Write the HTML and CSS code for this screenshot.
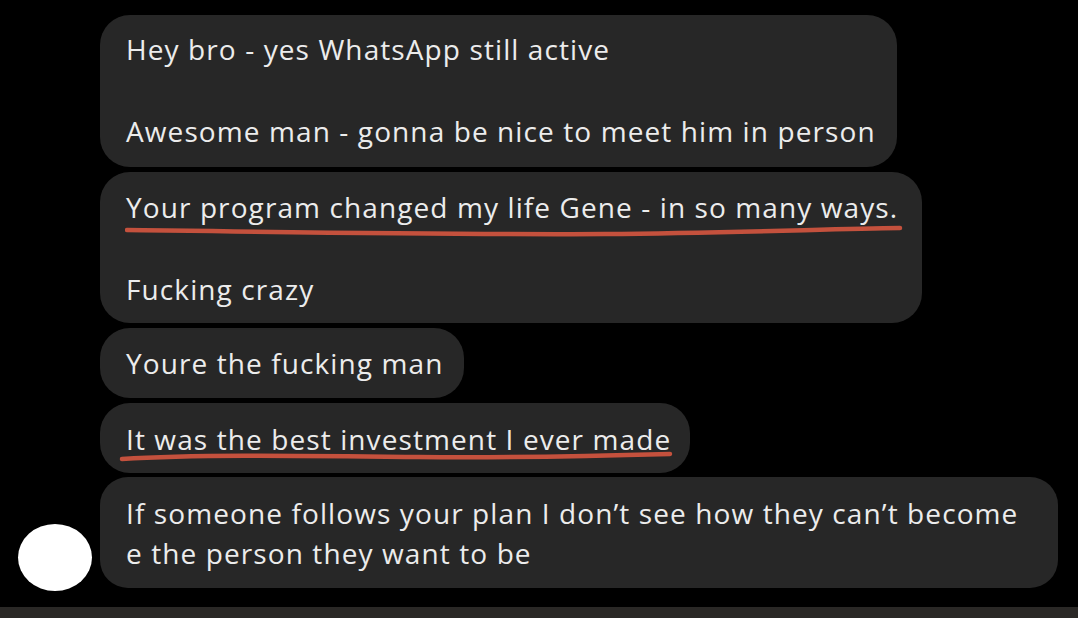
FILE: index.html
```html
<!DOCTYPE html>
<html>
<head>
<meta charset="utf-8">
<link rel="stylesheet" href="styles.css">
</head>
<body>
<div class="screen">
  <div class="thread">
    <div class="row">
      <div class="bubble b1">
        <p>Hey bro - yes WhatsApp still active</p>
        <p class="gap">Awesome man - gonna be nice to meet him in person</p>
      </div>
    </div>
    <div class="row">
      <div class="bubble b2">
        <p>Your program changed my life Gene - in so many ways.</p>
        <p class="gap">Fucking crazy</p>
        <svg class="mark mark1" width="780" height="14" viewBox="0 0 780 14"><path d="M2 6 C 150 8, 350 11, 480 10 S 700 5, 775 4" fill="none" stroke="#c4513d" stroke-width="4.5" stroke-linecap="round"/></svg>
      </div>
    </div>
    <div class="row">
      <div class="bubble b3">
        <p>Youre the fucking man</p>
      </div>
    </div>
    <div class="row">
      <div class="bubble b4">
        <p>It was the best investment I ever made</p>
        <svg class="mark mark2" width="556" height="16" viewBox="0 0 556 16"><path d="M3 10 C 80 5, 200 7, 300 8 S 480 7, 551 5" fill="none" stroke="#c4513d" stroke-width="4.5" stroke-linecap="round"/></svg>
      </div>
    </div>
    <div class="row last">
      <div class="avatar"></div>
      <div class="bubble b5">
        <p>If someone follows your plan I don’t see how they can’t become<br>e the person they want to be</p>
      </div>
    </div>
  </div>
  <div class="strip"></div>
</div>
</body>
</html>
```
FILE: styles.css
```css
html, body {
  margin: 0;
  padding: 0;
  background: #000;
}
.screen {
  width: 1078px;
  height: 618px;
  display: flex;
  flex-direction: column;
  background: #000;
  overflow: hidden;
}
.thread {
  flex: 1;
  display: flex;
  flex-direction: column;
  gap: 5px;
  padding-top: 15px;
}
.row {
  display: flex;
  padding-left: 100px;
  position: relative;
}
.bubble {
  position: relative;
  box-sizing: border-box;
  background: #272727;
  border-radius: 30px;
  padding: 14px 26px 0;
  color: #ececec;
  font-family: "Open Sans", "Liberation Sans", sans-serif;
  font-size: 28px;
  letter-spacing: 1.1px;
  line-height: 41px;
}
.bubble p {
  margin: 0;
  white-space: nowrap;
}
.bubble p.gap {
  margin-top: 41px;
}
.b1 { width: 797px; height: 152px; padding-top: 14px; }
.b2 { width: 822px; height: 151px; padding-top: 15px; }
.b3 { width: 364px; height: 70px; padding-top: 15px; }
.b4 { width: 590px; height: 70px; padding-top: 16px; }
.b5 { width: 958px; height: 111px; padding-top: 16px; line-height: 40px; border-radius: 28px; }
.row.last { margin-top: -1px; }
.avatar {
  position: absolute;
  left: 18px;
  top: 47px;
  width: 74px;
  height: 67px;
  border-radius: 50%;
  background: #fff;
}
.mark {
  position: absolute;
}
.mark1 { left: 25px; top: 52px; }
.mark2 { left: 19px; top: 46px; }
.strip {
  height: 11px;
  background: #2a2826;
}
```
